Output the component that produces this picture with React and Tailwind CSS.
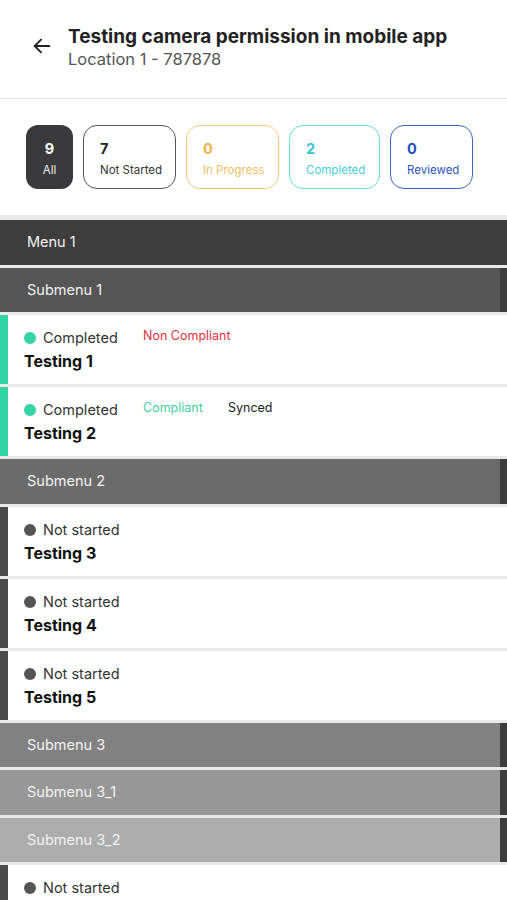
import React from "react";

const font = { fontFamily: "Inter, 'Noto Sans', sans-serif" };

function Chip({ n, label, cls, numCls, labelCls, w }) {
  return (
    <div className={`flex flex-col justify-center rounded-[14px] border-[1.5px] pl-4 pt-[4px] h-[64px] ${cls} ${w}`}>
      <div className={`text-[14.5px] font-bold leading-[18px] ${numCls}`}>{n}</div>
      <div className={`text-[11.5px] leading-[16px] mt-[4px] ${labelCls}`}>{label}</div>
    </div>
  );
}

function Header({ label, bg, edge = true }) {
  return (
    <div className={`flex h-[44.5px] ${bg}`}>
      <div className="flex-1 flex items-center pl-[27px] text-[14.5px] text-[#f2f2f2]">{label}</div>
      {edge && <div className="w-[7px] bg-[#3c3c3c]" />}
    </div>
  );
}

function Item({ status, title, bar, dot, tags = [] }) {
  return (
    <div className="flex h-[69px] bg-white">
      <div className={`w-[8px] ${bar}`} />
      <div className="flex-1 pl-[16px] pt-[13px]">
        <div className="flex items-center h-[20px]">
          <span className={`w-[12px] h-[12px] rounded-full ${dot}`} />
          <span className="ml-[7px] text-[14.5px] text-[#333] w-[100px]">{status}</span>
          {tags.map((t, i) => (
            <span key={i} className={`text-[12.5px] mb-[3px] ${t.cls}`}>{t.text}</span>
          ))}
        </div>
        <div className="text-[16px] font-bold text-[#111] leading-[22px] mt-[2px]">{title}</div>
      </div>
    </div>
  );
}

export default function App() {
  return (
    <div style={font} className="w-[507px] h-[900px] overflow-hidden bg-[#e9e9eb]">
      <div className="bg-white h-[99px] flex items-start border-b border-[#e3e3e3]">
        <div className="w-[68px] pt-[35px] pl-[31px]">
          <svg width="22" height="22" viewBox="0 0 24 24" fill="none" stroke="#222" strokeWidth="2" strokeLinecap="round" strokeLinejoin="round">
            <path d="M20 12H4" />
            <path d="M11 5l-7 7 7 7" />
          </svg>
        </div>
        <div className="pt-[24px]">
          <div className="text-[19px] font-bold text-[#222] leading-[25px]">Testing camera permission in mobile app</div>
          <div className="text-[16.5px] text-[#555] leading-[21px]">Location 1 - 787878</div>
        </div>
      </div>
      <div className="bg-white h-[116px] flex items-start pt-[26px] pl-[26px] gap-[10px]">
        <div className="flex flex-col items-center justify-center pt-[4px] rounded-[12px] bg-[#3a3a3c] w-[47px] h-[64px]">
          <div className="text-[14.5px] font-bold text-white leading-[18px]">9</div>
          <div className="text-[11.5px] text-[#eee] leading-[16px] mt-[4px]">All</div>
        </div>
        <Chip n="7" label="Not Started" w="w-[93px]" cls="border-[#555]" numCls="text-[#222]" labelCls="text-[#333]" />
        <Chip n="0" label="In Progress" w="w-[93px]" cls="border-[#f2c77a]" numCls="text-[#f0b24a]" labelCls="text-[#f2bc5f]" />
        <Chip n="2" label="Completed" w="w-[91px]" cls="border-[#62dde2]" numCls="text-[#33c6d6]" labelCls="text-[#45cfdc]" />
        <Chip n="0" label="Reviewed" w="w-[83px]" cls="border-[#3a66c4]" numCls="text-[#1f4fbf]" labelCls="text-[#2a58c0]" />
      </div>
      <div className="pt-[5px] flex flex-col gap-[3px]">
        <Header label="Menu 1" bg="bg-[#3d3d3d]" edge={false} />
        <Header label="Submenu 1" bg="bg-[#555555]" />
        <Item
          status="Completed"
          title="Testing 1"
          bar="bg-[#34d3a3]"
          dot="bg-[#34d3a3]"
          tags={[{ text: "Non Compliant", cls: "text-[#e2303c]" }]}
        />
        <Item
          status="Completed"
          title="Testing 2"
          bar="bg-[#34d3a3]"
          dot="bg-[#34d3a3]"
          tags={[
            { text: "Compliant", cls: "text-[#3fcf9c] w-[85px]" },
            { text: "Synced", cls: "text-[#222]" },
          ]}
        />
        <Header label="Submenu 2" bg="bg-[#6b6b6b]" />
        <Item status="Not started" title="Testing 3" bar="bg-[#4a4a4a]" dot="bg-[#555]" />
        <Item status="Not started" title="Testing 4" bar="bg-[#4a4a4a]" dot="bg-[#555]" />
        <Item status="Not started" title="Testing 5" bar="bg-[#4a4a4a]" dot="bg-[#555]" />
        <Header label="Submenu 3" bg="bg-[#818181]" />
        <Header label="Submenu 3_1" bg="bg-[#979797]" />
        <Header label="Submenu 3_2" bg="bg-[#adadad]" />
        <Item status="Not started" title="Testing 6" bar="bg-[#4a4a4a]" dot="bg-[#555]" />
      </div>
    </div>
  );
}
